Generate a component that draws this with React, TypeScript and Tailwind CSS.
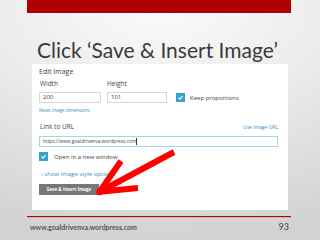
import React from "react";

function Check() {
  return (
    <div className="w-[9px] h-[9px] bg-[#3a9fc9] flex items-center justify-center shrink-0">
      <svg width="7" height="7" viewBox="0 0 10 10">
        <path d="M2 5.2 L4.2 7.4 L8.2 2.8" fill="none" stroke="#fff" strokeWidth="1.6" />
      </svg>
    </div>
  );
}

export default function App() {
  return (
    <div
      className="w-[320px] h-[240px] relative overflow-hidden flex flex-col bg-[radial-gradient(ellipse_120%_100%_at_50%_0%,#fbfbfb_0%,#ececec_45%,#d2d2d2_100%)]"
      style={{ fontFamily: "'Open Sans', 'DejaVu Sans', sans-serif" }}
    >
      <div className="ml-[27px] w-[264px] h-[13px] bg-[#b00000] shrink-0" />
      <div
        className="pl-[37px] mt-[25px] text-[21px] leading-[24px] text-[#3a3a3a] h-[26px] whitespace-nowrap"
        style={{ fontFamily: "Lato, 'Open Sans', sans-serif" }}
      >
        Click ‘Save &amp; Insert Image’
      </div>
      <div className="ml-[32px] w-[256px] h-[146px] bg-white flex flex-col pl-[7px] pr-[10px] text-[#444]">
        <div className="text-[7px] leading-[8px] mt-[4px]">Edit Image</div>
        <div className="flex mt-[4px] text-[6.5px] leading-[8px]">
          <div className="w-[68px] pl-px">Width</div>
          <div>Height</div>
        </div>
        <div className="flex items-center mt-[4px]">
          <div className="w-[62px] h-[11px] border border-[#d8d8d8] text-[6px] leading-[9px] pl-[3px]">200</div>
          <div className="ml-[6px] w-[60px] h-[11px] border border-[#d8d8d8] text-[6px] leading-[9px] pl-[3px]">101</div>
          <div className="ml-[9px]"><Check /></div>
          <div className="ml-[5px] text-[6px] leading-[8px]">Keep proportions</div>
        </div>
        <div className="text-[4.5px] leading-[6px] mt-[4px] text-[#3a8fb7]">Reset image dimensions</div>
        <div className="flex justify-between items-center mt-[10px] text-[6.5px] leading-[8px]">
          <div className="pl-px">Link to URL</div>
          <div className="text-[5px] text-[#3a8fb7]">Use image URL</div>
        </div>
        <div className="mt-[5px] h-[11px] border border-[#9ed6ea] text-[4.8px] leading-[9px] pl-[3px] flex items-center">
          <span>https://www.goaldrivenva.wordpress.com</span>
          <span className="w-px h-[7px] bg-[#333]" />
        </div>
        <div className="flex items-center mt-[5px]">
          <Check />
          <div className="ml-[6px] text-[6px] leading-[8px]">Open in a new window</div>
        </div>
        <div className="mt-[9px] text-[6px] leading-[8px] text-[#3a8fb7] pl-[2px]">› show image style options</div>
        <div className="mt-[6px] w-[60px] h-[11px] bg-[#777] text-white text-[4.5px] font-bold flex items-center justify-center">
          Save &amp; Insert Image
        </div>
      </div>
      <div className="ml-[27px] w-[264px] h-px bg-[#c00000] mt-[6px]" />
      <div className="ml-[27px] w-[264px] h-px bg-[#bcbcbc]" />
      <div className="flex justify-between items-center pl-[30px] pr-[31px] mt-[4px]">
        <div
          className="text-[7px] font-bold text-[#555] leading-[10px]"
          style={{ fontFamily: "Lato, 'Open Sans', sans-serif" }}
        >
          www.goaldrivenva.wordpress.com
        </div>
        <div className="text-[9px] text-[#444] leading-[10px]" style={{ fontFamily: "Lato, 'Open Sans', sans-serif" }}>93</div>
      </div>
      <svg className="absolute left-0 top-0" width="320" height="240" viewBox="0 0 320 240">
        <g stroke="#ff0000" strokeWidth="6" strokeLinecap="butt" fill="none">
          <line x1="174" y1="152" x2="101" y2="191" />
          <line x1="98" y1="194" x2="121" y2="161" />
          <line x1="97" y1="192" x2="138" y2="188" />
        </g>
      </svg>
    </div>
  );
}
